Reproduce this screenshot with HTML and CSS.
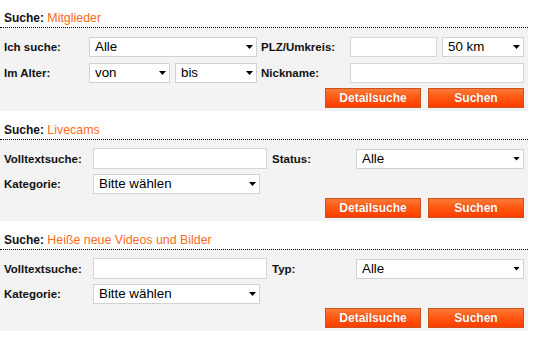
FILE: index.html
```html
<!DOCTYPE html>
<html lang="de">
<head>
  <meta charset="UTF-8">
  <title>Suche</title>
  <link rel="stylesheet" href="styles.css">
</head>
<body>
  <div class="wrap">

    <div class="search">
      <h2 class="search-title">Suche: <span>Mitglieder</span></h2>
      <form class="panel panel-members">
        <div class="grid grid-members">
          <label>Ich suche:</label>
          <div class="sel"><select><option>Alle</option></select></div>
          <label class="lbl-right">PLZ/Umkreis:</label>
          <div class="pair">
            <input type="text" class="plz">
            <div class="sel sel-km"><select><option>50 km</option></select></div>
          </div>

          <label>Im Alter:</label>
          <div class="pair">
            <div class="sel sel-von"><select><option>von</option></select></div>
            <div class="sel sel-bis"><select><option>bis</option></select></div>
          </div>
          <label class="lbl-right">Nickname:</label>
          <input type="text">
        </div>
        <div class="actions">
          <button type="button">Detailsuche</button>
          <button type="button">Suchen</button>
        </div>
      </form>
    </div>

    <div class="search">
      <h2 class="search-title">Suche: <span>Livecams</span></h2>
      <form class="panel">
        <div class="grid grid-media">
          <label>Volltextsuche:</label>
          <input type="text" class="tall">
          <label class="lbl-right">Status:</label>
          <div class="sel"><select><option>Alle</option></select></div>

          <label>Kategorie:</label>
          <div class="sel sel-cat"><select><option>Bitte wählen</option></select></div>
        </div>
        <div class="actions">
          <button type="button">Detailsuche</button>
          <button type="button">Suchen</button>
        </div>
      </form>
    </div>

    <div class="search">
      <h2 class="search-title">Suche: <span>Heiße neue Videos und Bilder</span></h2>
      <form class="panel">
        <div class="grid grid-media">
          <label>Volltextsuche:</label>
          <input type="text" class="tall">
          <label class="lbl-right">Typ:</label>
          <div class="sel"><select><option>Alle</option></select></div>

          <label>Kategorie:</label>
          <div class="sel sel-cat"><select><option>Bitte wählen</option></select></div>
        </div>
        <div class="actions">
          <button type="button">Detailsuche</button>
          <button type="button">Suchen</button>
        </div>
      </form>
    </div>

  </div>
</body>
</html>
```

FILE: styles.css
```css
* { box-sizing: border-box; }

body {
  margin: 0;
  background: #fff;
  font-family: "Liberation Sans", Arial, sans-serif;
  color: #111;
}

.wrap {
  width: 528px;
}

.search-title {
  margin: 0;
  height: 28px;
  padding: 11px 0 0 4px;
  line-height: 15px;
  font-size: 12px;
  font-weight: bold;
  color: #111;
  border-bottom: 1px dotted #000;
}

.search + .search .search-title {
  height: 29px;
  padding-top: 12px;
}

.search-title span {
  font-size: 12.4px;
  font-weight: normal;
  color: #fa6a1c;
}

.panel {
  margin: 0;
  background: #f3f3f3;
  padding: 8px 4px 3px 4px;
}

.panel-members {
  padding-top: 9px;
}

.grid {
  display: grid;
  row-gap: 5px;
  align-items: center;
}

.grid-members {
  grid-template-columns: 85px 168px 93px 174px;
  row-gap: 6px;
}

.grid-media {
  grid-template-columns: 89px 174px 89px 168px;
}

label {
  font-size: 11.5px;
  font-weight: bold;
  color: #111;
}

.lbl-right {
  padding-left: 5px;
}

.grid-members .lbl-right {
  padding-left: 4px;
}

input, select {
  font-family: "Liberation Sans", Arial, sans-serif;
  font-size: 13.33px;
  color: #000;
  height: 20px;
  border: 1px solid #d2d2d2;
  background: #fff;
  margin: 0;
  border-radius: 0;
  outline: none;
}

input {
  width: 100%;
  padding: 0 4px;
  border-color: #d6d6d9;
}

input.tall {
  height: 21px;
}

.sel {
  position: relative;
}

.sel select {
  -webkit-appearance: none;
  appearance: none;
  width: 100%;
  padding: 0 16px 0 5px;
  line-height: 18px;
}

.sel::after {
  content: "";
  position: absolute;
  right: 4px;
  top: 8px;
  width: 7px;
  height: 4px;
  background: #000;
  clip-path: polygon(0 0, 100% 0, 50% 100%);
  pointer-events: none;
}

.pair {
  display: flex;
  gap: 5px;
}

.plz {
  width: 87px;
  flex: none;
}

.sel-km {
  width: 82px;
}

.sel-von {
  width: 81px;
}

.sel-bis {
  width: 82px;
}

.sel-cat {
  width: 167px;
}

.actions {
  display: flex;
  justify-content: flex-end;
  gap: 7px;
  margin-top: 4px;
}

.panel-members .actions {
  margin-top: 5px;
}

button {
  width: 96px;
  height: 20px;
  padding: 0;
  font-family: "Liberation Sans", Arial, sans-serif;
  font-size: 12px;
  font-weight: bold;
  color: #fff;
  text-shadow: 0 0 1px rgba(120, 30, 0, 0.6);
  border: 1px solid #c9531b;
  background: linear-gradient(to bottom, #fa7a3a 0%, #ff5a12 45%, #ff3c00 100%);
  cursor: pointer;
}
```
